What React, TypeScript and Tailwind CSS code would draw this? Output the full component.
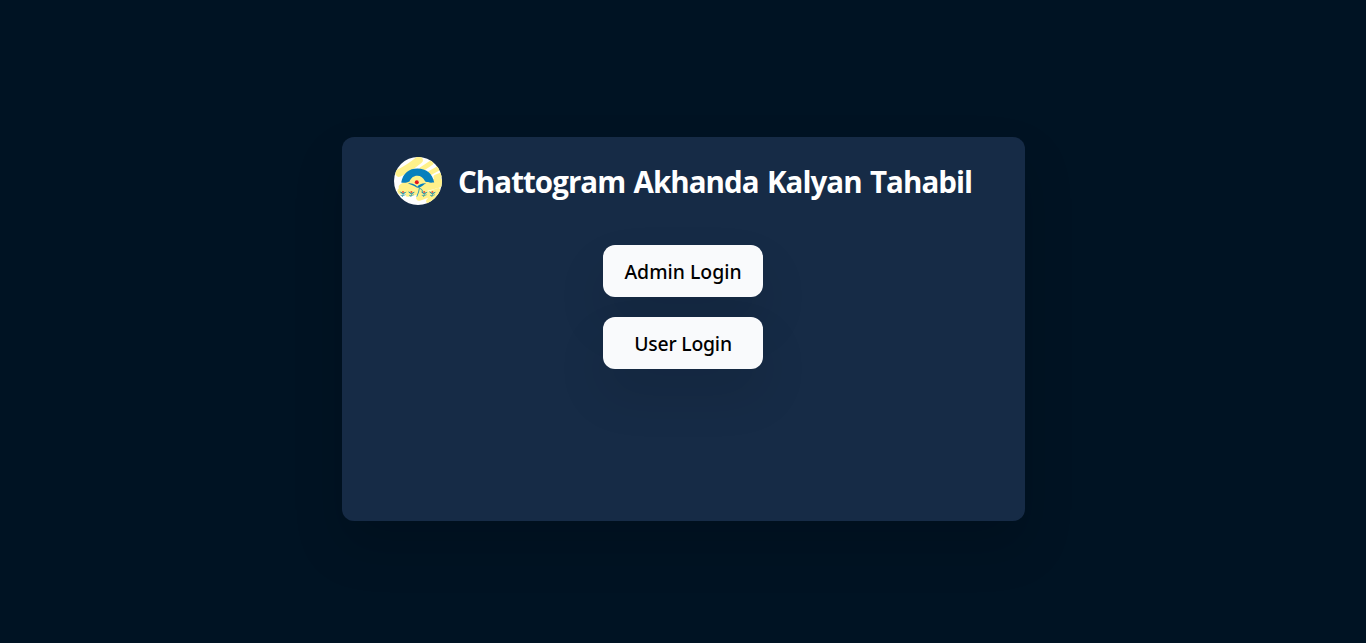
import React from "react";

function Sprout({ x, y }: { x: number; y: number }) {
  return (
    <g transform={`translate(${x} ${y})`}>
      <path d="M-3.6-1.9Q-1.2-1.6 0 0Q1.2-1.5 3.6-1.7Q2 .1 0 1Q-2-.1-3.6-1.9Z" fill="#1789b0" />
      <path d="M.2.4Q.2 2-.8 3.6M-2.4 1.9Q0 2.8 2.4 1.3" fill="none" stroke="#3c9fa8" strokeWidth=".8" />
      <circle cy="-1.5" r="1" fill="#e3573e" />
    </g>
  );
}

function Logo() {
  return (
    <svg viewBox="0 0 48 48" className="size-12 shrink-0 rounded-full" aria-hidden="true">
      <rect width="48" height="48" fill="#fefefe" />
      <g fill="none" stroke="#fff18a" strokeLinecap="round" strokeLinejoin="round">
        <path d="M5 16Q14 12 25 3" strokeWidth="7.5" />
        <path d="M28 12L37 6M36 16L45 11M42 20L47 18" strokeWidth="4.8" />
        <path d="M8 30L18 24L25 19L30 27L45 24" strokeWidth="6.5" />
        <path d="M7 34L20 29L34 30L45 27" strokeWidth="7" />
        <path d="M14 37L31 33L25 41L44 34L35 44" strokeWidth="5.6" />
      </g>
      <path d="M7.2 25.5C9 16 15 11.5 23.6 11.5C32 11.5 38.5 16.3 40.2 25.5C37 25.8 34 25.8 31.2 24.5C29.3 20.5 26.8 18.7 23.3 18.7C19.5 18.7 16.8 21 15.5 24.5C12.7 26 9.7 26 7.2 25.5Z" fill="#087fbd" />
      <path d="M13.8 26.2C19 26.2 21.5 27.6 23.2 29.8C25 27.2 28 26 32.2 26.2C29.5 27.6 28.3 29.3 25.7 30.4Q23.6 31.6 21.5 29.7C18.8 28 17 28 13.8 26.2Z" fill="#087fbd" />
      <path d="M25.5 30.5Q25 35 22.8 39.6M25.6 31.2Q28.3 32 28.8 34.8" fill="none" stroke="#319eb2" strokeWidth="1" />
      <circle cx="22.8" cy="25.3" r="2" fill="#e5151e" />
      <Sprout x={9} y={36.4} />
      <Sprout x={17.4} y={36.4} />
      <Sprout x={30.2} y={36.4} />
      <Sprout x={38.4} y={36.4} />
    </svg>
  );
}

function LoginButton({ children }: { children: React.ReactNode }) {
  return (
    <button className="h-13 w-40 rounded-xl bg-[#f9fafc] pt-0.5 font-['Noto_Sans','Open_Sans',sans-serif] text-[19.4px] font-medium text-black shadow-[0_25px_50px_rgba(0,0,0,0.1)]">
      {children}
    </button>
  );
}

export default function App() {
  return (
    <main className="flex h-screen justify-center bg-[#001323] pt-[137px]">
      <section className="flex h-96 w-1/2 flex-col items-center rounded-xl bg-[#162b46] pt-5 shadow-[0_25px_50px_rgba(0,0,0,0.15)]">
        <header className="flex items-center gap-4">
          <Logo />
          <h1 className="w-[514px] whitespace-nowrap pt-0.5 font-['Open_Sans','Noto_Sans',sans-serif] text-[29.5px] leading-9 font-bold tracking-[-0.95px] [word-spacing:1.6px] text-white">
            Chattogram Akhanda Kalyan Tahabil
          </h1>
        </header>
        <div className="mt-10 flex flex-col gap-5">
          <LoginButton>Admin Login</LoginButton>
          <LoginButton>
            <span className="tracking-[-0.2px]">User Login</span>
          </LoginButton>
        </div>
      </section>
    </main>
  );
}
